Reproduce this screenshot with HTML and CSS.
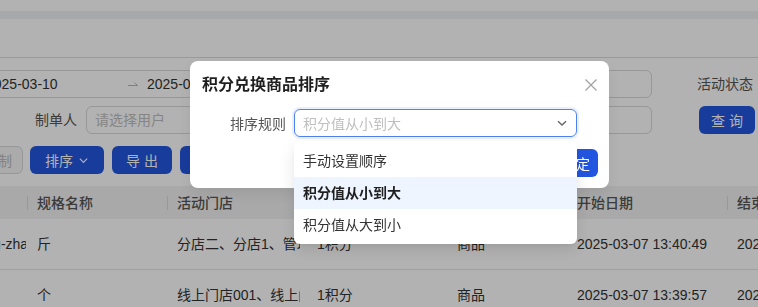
FILE: index.html
```html
<!DOCTYPE html>
<html lang="zh-CN">
<head>
  <meta charset="UTF-8">
  <meta name="viewport" content="width=device-width, initial-scale=1.0">
  <title>积分兑换商品</title>
  <link rel="stylesheet" href="styles.css">
</head>
<body>

  <div class="page">
    <div class="topbar"></div>
    <div class="tabs"></div>

    <div class="content">
      <div class="filter-row">
        <div class="range-box">
          <span class="range-start">2025-03-10</span>
          <svg class="range-sep" width="10" height="8" viewBox="0 0 10 8"><path d="M0 5.5H9.5M6.5 2.5L9.5 5.5" fill="none" stroke="#b5b5b5" stroke-width="1"/></svg>
          <span class="range-end">2025-03-10</span>
        </div>
        <span class="filter-label status-label">活动状态</span>
      </div>

      <div class="filter-row">
        <label class="filter-label creator-label">制单人</label>
        <div class="input-box">请选择用户</div>
        <button class="btn btn-primary btn-query">查 询</button>
      </div>

      <div class="toolbar">
        <button class="btn btn-default btn-copy">复制</button>
        <button class="btn btn-primary btn-sort">排序
          <svg width="11" height="11" viewBox="0 0 12 12"><path d="M2 4L6 8L10 4" fill="none" stroke="#fff" stroke-width="1.3"/></svg>
        </button>
        <button class="btn btn-primary btn-export">导 出</button>
        <button class="btn btn-primary btn-import">导入商品</button>
      </div>

      <div class="table">
        <div class="tr th">
          <div class="td"><span class="cell-text"></span></div>
          <div class="td sep"><span class="cell-text">规格名称</span></div>
          <div class="td sep"><span class="cell-text">活动门店</span></div>
          <div class="td sep"><span class="cell-text">兑换积分</span></div>
          <div class="td sep"><span class="cell-text">兑换类型</span></div>
          <div class="td sep"><span class="cell-text">开始日期</span></div>
          <div class="td sep"><span class="cell-text">结束日期</span></div>
        </div>
        <div class="tr">
          <div class="td"><span class="cell-text">wu-zhaoming</span></div>
          <div class="td"><span class="cell-text">斤</span></div>
          <div class="td store"><span class="cell-text">分店二、分店1、管理员门店</span></div>
          <div class="td"><span class="cell-text">1积分</span></div>
          <div class="td"><span class="cell-text">商品</span></div>
          <div class="td"><span class="cell-text">2025-03-07 13:40:49</span></div>
          <div class="td"><span class="cell-text">2025-03-31 23:59:59</span></div>
        </div>
        <div class="tr">
          <div class="td"><span class="cell-text"></span></div>
          <div class="td"><span class="cell-text">个</span></div>
          <div class="td store"><span class="cell-text">线上门店001、线上门店002</span></div>
          <div class="td"><span class="cell-text">1积分</span></div>
          <div class="td"><span class="cell-text">商品</span></div>
          <div class="td"><span class="cell-text">2025-03-07 13:39:57</span></div>
          <div class="td"><span class="cell-text">2025-03-31 23:59:59</span></div>
        </div>
      </div>
    </div>
  </div>

  <div class="mask"></div>

  <div class="modal">
    <div class="modal-header">
      <h2 class="modal-title">积分兑换商品排序</h2>
      <svg class="modal-close" width="14" height="14" viewBox="0 0 14 14"><path d="M1.5 1.5L12.5 12.5M12.5 1.5L1.5 12.5" fill="none" stroke="#a3a3a3" stroke-width="1.3"/></svg>
    </div>
    <div class="form-item">
      <label class="form-label">排序规则</label>
      <div class="select">
        <span class="select-placeholder">积分值从小到大</span>
        <svg width="12" height="12" viewBox="0 0 12 12"><path d="M2 4.2L6 8L10 4.2" fill="none" stroke="#666" stroke-width="1.4"/></svg>
      </div>
    </div>
    <div class="modal-footer">
      <button class="btn btn-default">取 消</button>
      <button class="btn btn-primary btn-ok">确定</button>
    </div>
  </div>

  <div class="dropdown">
    <div class="option">手动设置顺序</div>
    <div class="option selected">积分值从小到大</div>
    <div class="option">积分值从大到小</div>
  </div>

</body>
</html>
```

FILE: styles.css
```css
* {
  margin: 0;
  padding: 0;
  box-sizing: border-box;
}

body {
  width: 758px;
  height: 307px;
  overflow: hidden;
  background-color: #fff;
  font-family: "Liberation Sans", "Noto Sans CJK SC", sans-serif;
  font-size: 14px;
  color: #333;
}

.page {
  width: 758px;
  height: 307px;
  overflow: hidden;
}

.topbar {
  height: 11px;
  border-bottom: 8px solid #f0f1f3; /* 顶部间隔 */
  box-sizing: content-box;
}

.tabs {
  height: 39px;
  border-bottom: 1px solid #dcdcdc;
}

.content {
  margin-left: -27px;
  padding-top: 12px;
  width: 900px;
}

.filter-row {
  display: flex;
  align-items: center;
  height: 28px;
  margin-bottom: 8px;
}

.range-box {
  display: flex;
  align-items: center;
  width: 679px;
  height: 28px;
  padding: 0 12px;
  border: 1px solid #d9d9d9;
  border-radius: 6px;
  color: #333;
}

.range-start {
  width: 131px;
  overflow: hidden;
}

.range-sep {
  margin: 0 9px 0 11px;
}

.filter-label {
  color: #555;
  line-height: 28px;
}

.status-label {
  margin-left: 45px;
}

.creator-label {
  width: 113px;
  flex-shrink: 0;
  text-align: right;
  padding-right: 9px;
}

.input-box {
  width: 566px;
  flex-shrink: 0;
  height: 28px;
  line-height: 26px;
  padding-left: 8px;
  border: 1px solid #d9d9d9;
  border-radius: 6px;
  color: #bfbfbf;
}

.btn {
  height: 28px;
  border-radius: 6px;
  border: 1px solid transparent;
  font-family: inherit;
  font-size: 14px;
  display: inline-flex;
  align-items: center;
  justify-content: center;
  gap: 5px;
  white-space: nowrap;
  flex-shrink: 0;
}

.btn-primary {
  background-color: #2356e0;
  color: #fff;
}

.btn-default {
  background-color: #fff;
  border-color: #d9d9d9;
  color: #333;
}

.btn-query {
  width: 56px;
  margin-left: 47px;
}

.toolbar {
  display: flex;
  gap: 8px;
  margin-top: 12px;
  height: 28px;
}

.btn-copy {
  width: 50px;
  margin-right: -1px;
  color: #bbb;
  background-color: #f5f5f5;
}

.btn-sort {
  width: 74px;
}

.btn-export {
  width: 60px;
}

.btn-import {
  width: 90px;
}

.table {
  margin-top: 12px;
}

.tr {
  display: grid;
  grid-template-columns: 54px 140px 140px 140px 120px 160px 140px;
  height: 51px;
  border-bottom: 1px solid #e6e6e6;
}

.th {
  height: 33px;
  background-color: #f2f2f2;
  border-bottom: none;
  color: #555;
  font-weight: 500;
}

.td {
  display: flex;
  align-items: center;
  padding: 0 1px 0 10px;
  min-width: 0;
}

.cell-text {
  display: block;
  overflow: hidden;
  white-space: nowrap;
  line-height: 20px;
}

.store {
  padding-right: 7px;
}

.sep {
  position: relative;
}

.sep::before {
  content: "";
  position: absolute;
  left: 0;
  top: 10px;
  width: 1px;
  height: 14px;
  background-color: #dcdcdc;
}

/* 遮罩 */
.mask {
  position: fixed;
  inset: 0;
  background-color: rgba(0, 0, 0, 0.3);
}

.modal {
  position: fixed;
  left: 190px;
  top: 61px;
  width: 419px;
  height: 127px;
  padding: 12px 11px 11px 12px;
  background-color: #fff;
  border-radius: 8px;
  box-shadow: 0 6px 16px rgba(0, 0, 0, 0.08);
}

.modal-header {
  display: flex;
  align-items: center;
  justify-content: space-between;
  height: 24px;
}

.modal-title {
  font-size: 16px;
  font-weight: 600;
  color: #1f1f1f;
  line-height: 24px;
}

.modal-close {
  margin-right: 0;
}

.form-item {
  display: flex;
  align-items: center;
  margin-top: 12px;
}

.form-label {
  width: 92px;
  flex-shrink: 0;
  padding-right: 8px;
  text-align: right;
  color: #555;
}

.select {
  display: flex;
  align-items: center;
  justify-content: space-between;
  width: 283px;
  flex-shrink: 0;
  height: 28px;
  padding: 0 8px;
  border: 1px solid #4f82ef;
  border-radius: 6px;
  box-shadow: 0 0 0 2px rgba(35, 100, 240, 0.1);
}

.select-placeholder {
  color: #bfbfbf;
}

.modal-footer {
  display: flex;
  justify-content: flex-end;
  gap: 8px;
  margin-top: 12px;
}

.modal-footer .btn-default {
  width: 56px;
}

.btn-ok {
  padding: 0 7px;
}

.dropdown {
  position: fixed;
  left: 294px;
  top: 141px;
  width: 283px;
  padding: 4px 0 3px;
  background-color: #fff;
  border-radius: 6px;
  box-shadow: 0 6px 16px rgba(0, 0, 0, 0.1), 0 3px 6px -4px rgba(0, 0, 0, 0.12);
}

.option {
  height: 32px;
  line-height: 32px;
  padding: 0 9px;
  color: #333;
}

.option.selected {
  background-color: #eef5ff;
  font-weight: 600;
  color: #1f1f1f;
}
```
